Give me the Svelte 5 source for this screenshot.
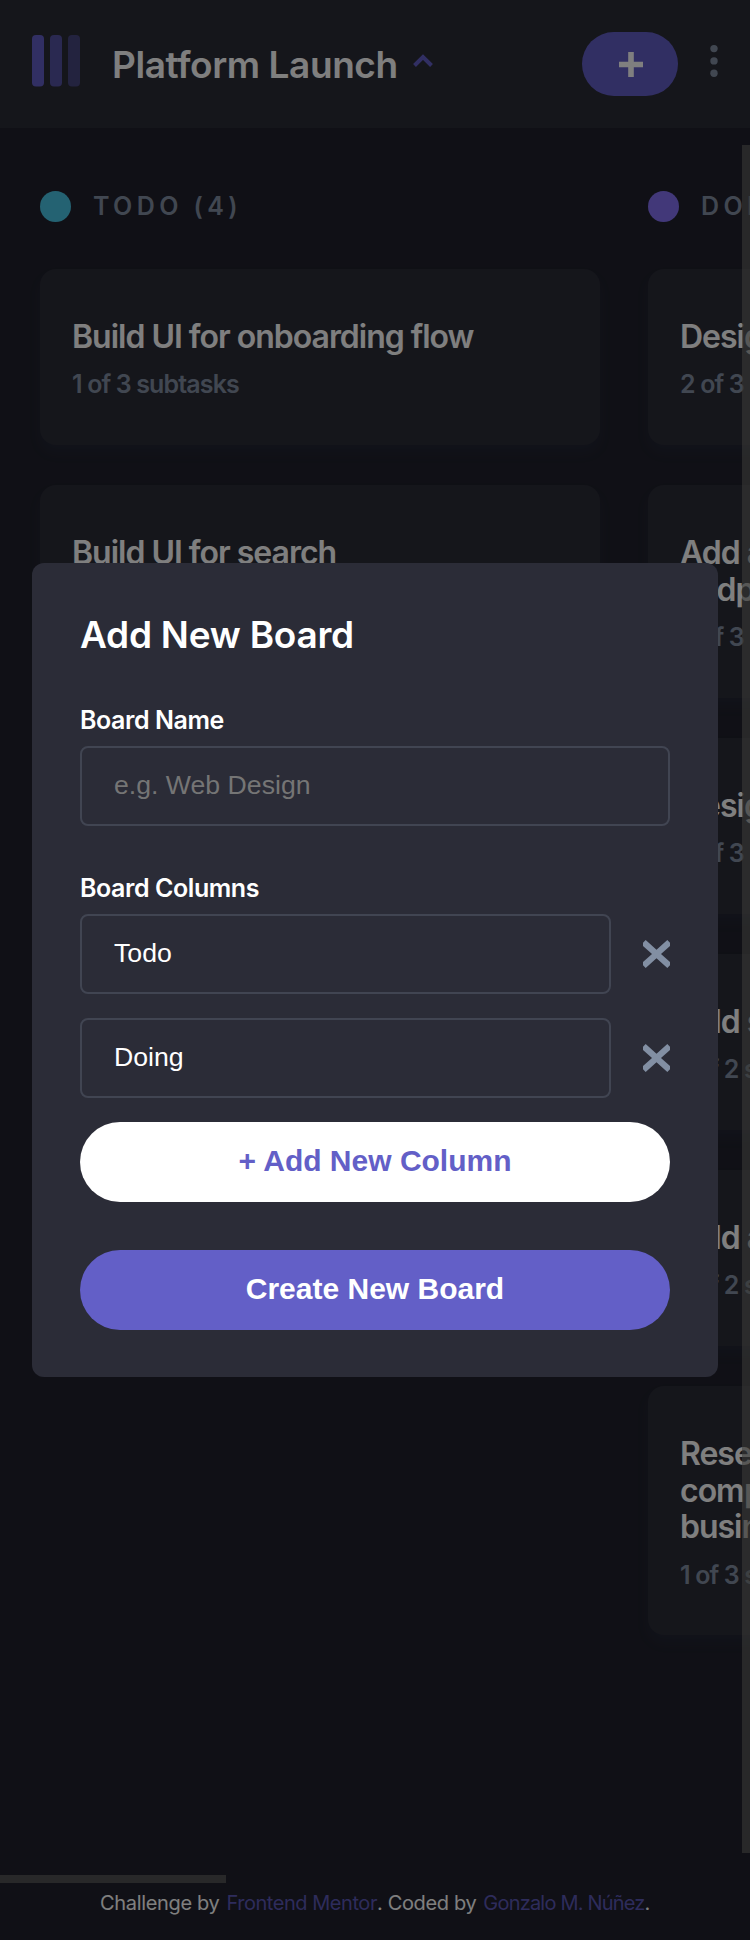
<script>
  const columns = [
    {
      name: 'TODO',
      count: 4,
      color: '#49c4e5',
      tasks: [
        { lines: ['Build UI for onboarding flow'], sub: '1 of 3 subtasks' },
        { lines: ['Build UI for search'], sub: '0 of 1 subtasks' }
      ]
    },
    {
      name: 'DOING',
      count: 6,
      color: '#8471f2',
      tasks: [
        { lines: ['Design settings and search pages'], sub: '2 of 3 subtasks' },
        { lines: ['Add account management', 'endpoints'], sub: '2 of 3 subtasks' },
        { lines: ['Design onboarding flow'], sub: '2 of 3 subtasks' },
        { lines: ['Add search endpoints'], sub: '1 of 2 subtasks' },
        { lines: ['Add authentication endpoints'], sub: '1 of 2 subtasks' },
        {
          lines: ['Research pricing points of various', 'competitors and trial different', 'business models'],
          sub: '1 of 3 subtasks'
        }
      ]
    }
  ];
  let fields = $state(['Todo', 'Doing']);
</script>

<div class="app">
  <header>
    <svg class="logo" width="48" height="52" viewBox="0 0 48 52" fill="#635fc7">
      <rect width="12" height="51.5" rx="4" />
      <rect x="18" width="12" height="51.5" rx="4" opacity=".75" />
      <rect x="36" width="12" height="51.5" rx="4" opacity=".5" />
    </svg>
    <h1>Platform Launch</h1>
    <svg class="chevron" width="20" height="14" viewBox="0 0 20 14" fill="none" stroke="#635fc7" stroke-width="4">
      <path d="M1.5 11.5 10 3l8.500 8.500" />
    </svg>
    <button class="add" aria-label="Add task">
      <svg width="24" height="25" viewBox="0 0 24 25" fill="#fff">
        <path d="M9.200 0h5.600v9.700H24v5.600h-9.200V25H9.200v-9.700H0V9.700h9.200z" />
      </svg>
    </button>
    <svg class="dots" width="8" height="34" viewBox="0 0 8 34" fill="#828fa3">
      <circle cx="4" cy="4.600" r="3.700" />
      <circle cx="4" cy="16.900" r="3.700" />
      <circle cx="4" cy="29.200" r="3.700" />
    </svg>
  </header>

  <main>
    {#each columns as col}
      <section>
        <h2><i style="background:{col.color}"></i><span>{col.name} ({col.count})</span></h2>
        {#each col.tasks as task}
          <article>
            <h3>{#each task.lines as line}<span>{line}</span>{/each}</h3>
            <p>{task.sub}</p>
          </article>
        {/each}
      </section>
    {/each}
  </main>
  <div class="bar vertical"></div>
  <div class="bar horizontal"></div>

  <footer>
    <span class="by">Challenge by</span><a href="#mentor">Frontend Mentor</a><span class="by coded">. Coded by</span><a class="author" href="#author">Gonzalo M. Núñez</a><span>.</span>
  </footer>

  <div class="overlay">
    <form class="modal">
      <h2>Add New Board</h2>
      <label for="board">Board Name</label>
      <input id="board" placeholder="e.g. Web Design" />
      <div class="label">Board Columns</div>
      <div class="rows">
        {#each fields as _, i}
          <div class="row">
            <input bind:value={fields[i]} aria-label="Column name" />
            <svg width="27" height="28" viewBox="0 0 27 28" fill="#828fa3">
              <path d="M2.700 0 13.500 9.800 24.300 0 27 2.700v3.300L18 14l9 8v3.300L24.300 28l-10.800-9.800L2.700 28 0 25.300V22l9-8-9-8V2.700z" />
            </svg>
          </div>
        {/each}
      </div>
      <button type="button" class="light">+ Add New Column</button>
      <button type="button" class="primary">Create New Board</button>
    </form>
  </div>
</div>

<style>
  :global(body) { margin: 0; background: #101116; }
  * { box-sizing: border-box; }
  h1, h2, h3, p { margin: 0; }
  .app {
    position: relative;
    display: flex;
    flex-direction: column;
    width: 750px;
    height: 1940px;
    overflow: hidden;
    background: #20212c;
    color: #fff;
    font-family: Inter, sans-serif;
  }
  header {
    display: flex;
    align-items: center;
    flex: none;
    height: 128px;
    padding: 0 32px;
    background: #2b2c37;
  }
  .logo { margin-top: -6px; }
  h1 {
    margin-left: 32px;
    padding-top: 2px;
    font-size: 37px;
    font-weight: 600;
    line-height: 48px;
    letter-spacing: -.43px;
    white-space: nowrap;
  }
  .chevron { margin: -7px 0 0 15px; }
  button { border: 0; cursor: pointer; }
  .add {
    display: flex;
    align-items: center;
    justify-content: center;
    width: 96px;
    height: 64px;
    margin-left: auto;
    padding: 1px 0 0 2px;
    border-radius: 32px;
    background: #635fc7;
  }
  .dots { margin: -6px 0 0 32px; }
  main {
    display: flex;
    flex: none;
    gap: 48px;
    width: 1250px;
    height: 1755px;
    padding: 55px 40px 0;
  }
  section {
    display: flex;
    flex: none;
    flex-direction: column;
    gap: 40px;
    width: 560px;
  }
  section h2 {
    display: flex;
    align-items: center;
    gap: 22px;
    height: 46px;
    color: #828fa3;
    font-size: 25px;
    font-weight: 600;
    letter-spacing: 4.400px;
  }
  section h2 i { width: 31px; height: 31px; border-radius: 50%; }
  article {
    padding: 50px 32px 44.500px;
    border-radius: 16px;
    background: #2b2c37;
    box-shadow: 0 8px 12px rgba(54, 78, 126, .1);
  }
  h3 {
    font-size: 32px;
    font-weight: 600;
    line-height: 36.800px;
    letter-spacing: -1.010px;
    white-space: nowrap;
  }
  h3 span { display: block; }
  article p {
    margin-top: 13.500px;
    color: #828fa3;
    font-size: 25px;
    font-weight: 600;
    line-height: 31.200px;
    letter-spacing: -.87px;
  }
  .bar { position: absolute; background: rgba(118, 118, 112, .58); }
  .vertical { top: 145px; right: 0; width: 8px; height: 1708px; }
  .horizontal { top: 1875px; left: 0; width: 226px; height: 8px; }
  footer {
    display: flex;
    justify-content: center;
    margin-top: 5px;
    font-size: 20px;
    line-height: 30px;
    letter-spacing: -.45px;
    white-space: nowrap;
  }
  footer a { color: #635fc7; text-decoration: none; opacity: .9; }
  footer .by { margin-right: 7px; letter-spacing: -.35px; }
  footer .author { letter-spacing: -.8px; }
  .overlay {
    position: absolute;
    inset: 0;
    display: flex;
    align-items: center;
    justify-content: center;
    background: rgba(0, 0, 0, .5);
  }
  .modal {
    display: flex;
    flex-direction: column;
    width: 686px;
    height: 814px;
    padding: 49px 48px 48px;
    border-radius: 12px;
    background: #2b2c37;
  }
  .modal h2 {
    font-size: 37px;
    font-weight: 600;
    line-height: 46px;
    letter-spacing: -.25px;
  }
  .modal label, .label {
    margin-top: 46px;
    font-size: 25px;
    font-weight: 600;
    line-height: 32px;
    letter-spacing: -.43px;
  }
  .modal input {
    flex: none;
    width: 100%;
    height: 80px;
    margin-top: 10px;
    padding: 0 32px 2px;
    border: 2px solid rgba(130, 143, 163, .25);
    border-radius: 8px;
    outline: 0;
    background: transparent;
    color: #fff;
    font: 26.670px "Liberation Sans", Arial, sans-serif;
  }
  .modal input::placeholder { color: #757575; opacity: 1; }
  .rows { display: flex; flex-direction: column; gap: 24px; margin: 10px 0 24px; }
  .row { display: flex; align-items: center; justify-content: space-between; }
  .modal .row input { width: 531px; margin: 0; }
  .light, .primary {
    flex: none;
    height: 80px;
    padding: 0 0 2px;
    border-radius: 40px;
    font: bold 30px "Liberation Sans", Arial, sans-serif;
  }
  .light { background: #fff; color: #635fc7; }
  .primary { margin-top: 48px; background: #635fc7; color: #fff; }
</style>
